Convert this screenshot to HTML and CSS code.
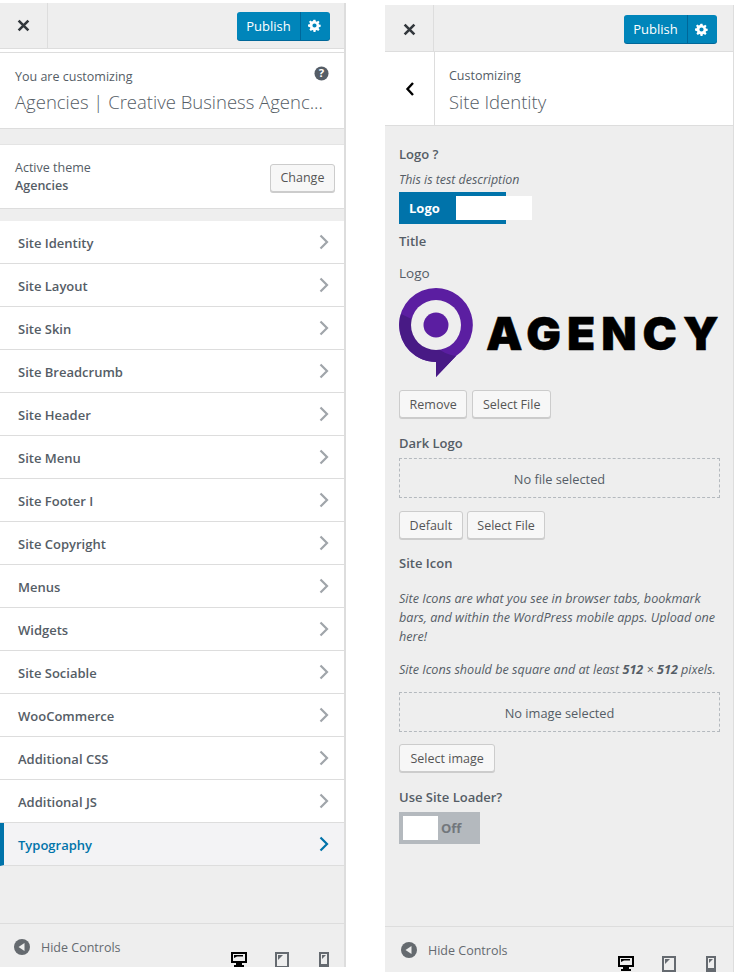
FILE: index.html
```html
<!DOCTYPE html>
<html lang="en">
<head>
    <meta charset="UTF-8">
    <title>Customizer</title>
    <link rel="stylesheet" href="styles.css">
</head>
<body>
<div class="page">
    <!-- main panel -->
    <div class="panel panel-main">
        <div class="topbar">
            <div class="close-box">
                <svg class="close-icon" viewBox="0 0 12 12"><path d="M1.5 1.5L10.5 10.5M10.5 1.5L1.5 10.5"/></svg>
            </div>
            <div class="publish">
                <span class="publish-label">Publish</span>
                <span class="publish-gear">
                    <svg class="gear-icon" viewBox="0 0 20 20"><path fill-rule="evenodd" d="M8.500 1h3l.5 2.600 1.500.6 2.200-1.500 2.100 2.100-1.500 2.200.6 1.500 2.600.5v3l-2.600.5-.6 1.500 1.500 2.200-2.100 2.100-2.200-1.500-1.500.6-.5 2.600h-3l-.5-2.600-1.500-.6-2.200 1.500-2.100-2.100 1.500-2.200-.6-1.500L-.1 11.500v-3l2.600-.5.6-1.500-1.500-2.200 2.100-2.100 2.200 1.500 1.500-.6zM10 6.800a3.200 3.200 0 1 0 0 6.400 3.200 3.200 0 0 0 0-6.400z"/></svg>
                </span>
            </div>
        </div>
        <div class="info-box">
            <div class="info-row">
                <span class="info-small">You are customizing</span>
                <svg class="help-icon" viewBox="0 0 16 16"><circle cx="8" cy="8" r="7.500"/><text x="8" y="12" text-anchor="middle">?</text></svg>
            </div>
            <div class="info-title">Agencies | Creative Business Agenc...</div>
        </div>
        <div class="theme-box">
            <div class="theme-text">
                <div class="info-small">Active theme</div>
                <div class="theme-name">Agencies</div>
            </div>
            <button class="btn btn-change">Change</button>
        </div>
        <ul class="menu-list">
            <li class="menu-item">Site Identity<svg class="chevron" viewBox="0 0 10 16"><path d="M1.500 1.500L8 8l-6.500 6.500"/></svg></li>
            <li class="menu-item">Site Layout<svg class="chevron" viewBox="0 0 10 16"><path d="M1.500 1.500L8 8l-6.500 6.500"/></svg></li>
            <li class="menu-item">Site Skin<svg class="chevron" viewBox="0 0 10 16"><path d="M1.500 1.500L8 8l-6.500 6.500"/></svg></li>
            <li class="menu-item">Site Breadcrumb<svg class="chevron" viewBox="0 0 10 16"><path d="M1.500 1.500L8 8l-6.500 6.500"/></svg></li>
            <li class="menu-item">Site Header<svg class="chevron" viewBox="0 0 10 16"><path d="M1.500 1.500L8 8l-6.500 6.500"/></svg></li>
            <li class="menu-item">Site Menu<svg class="chevron" viewBox="0 0 10 16"><path d="M1.500 1.500L8 8l-6.500 6.500"/></svg></li>
            <li class="menu-item">Site Footer I<svg class="chevron" viewBox="0 0 10 16"><path d="M1.500 1.500L8 8l-6.500 6.500"/></svg></li>
            <li class="menu-item">Site Copyright<svg class="chevron" viewBox="0 0 10 16"><path d="M1.500 1.500L8 8l-6.500 6.500"/></svg></li>
            <li class="menu-item">Menus<svg class="chevron" viewBox="0 0 10 16"><path d="M1.500 1.500L8 8l-6.500 6.500"/></svg></li>
            <li class="menu-item">Widgets<svg class="chevron" viewBox="0 0 10 16"><path d="M1.500 1.500L8 8l-6.500 6.500"/></svg></li>
            <li class="menu-item">Site Sociable<svg class="chevron" viewBox="0 0 10 16"><path d="M1.500 1.500L8 8l-6.500 6.500"/></svg></li>
            <li class="menu-item">WooCommerce<svg class="chevron" viewBox="0 0 10 16"><path d="M1.500 1.500L8 8l-6.500 6.500"/></svg></li>
            <li class="menu-item">Additional CSS<svg class="chevron" viewBox="0 0 10 16"><path d="M1.500 1.500L8 8l-6.500 6.500"/></svg></li>
            <li class="menu-item">Additional JS<svg class="chevron" viewBox="0 0 10 16"><path d="M1.500 1.500L8 8l-6.500 6.500"/></svg></li>
            <li class="menu-item menu-item-active">Typography<svg class="chevron" viewBox="0 0 10 16"><path d="M1.500 1.500L8 8l-6.500 6.500"/></svg></li>
        </ul>
        <div class="footer">
            <svg class="hide-icon" viewBox="0 0 16 16"><circle cx="8" cy="8" r="8"/><path d="M10.500 4v8L4.500 8z"/></svg>
            <span class="hide-label">Hide Controls</span>
            <div class="devices">
                <svg class="device device-desktop" viewBox="0 0 16 16"><path fill-rule="evenodd" d="M0 0h16v11h-5v2h2v2H3v-2h2v-2H0zM2 2v7h12V2z"/><path d="M3 3h9v1.500H6L3 6z"/></svg>
                <svg class="device device-tablet" viewBox="0 0 14 16"><path fill-rule="evenodd" d="M0 0h14v16H0zM2 2v12h10V2z"/><path d="M3 3h5L3 8z"/></svg>
                <svg class="device device-phone" viewBox="0 0 10 16"><path fill-rule="evenodd" d="M0 0h10v16H0zM2 2v10h6V2z"/><path d="M3 3h4L3 7z"/></svg>
            </div>
        </div>
    </div>

    <!-- site identity section -->
    <div class="panel panel-section">
        <div class="topbar">
            <div class="close-box">
                <svg class="close-icon" viewBox="0 0 12 12"><path d="M1.500 1.500L10.500 10.500M10.500 1.500L1.500 10.500"/></svg>
            </div>
            <div class="publish">
                <span class="publish-label">Publish</span>
                <span class="publish-gear">
                    <svg class="gear-icon" viewBox="0 0 20 20"><path fill-rule="evenodd" d="M8.500 1h3l.5 2.600 1.500.6 2.200-1.500 2.100 2.100-1.500 2.200.6 1.500 2.600.5v3l-2.600.5-.6 1.500 1.500 2.200-2.100 2.100-2.200-1.500-1.500.6-.5 2.600h-3l-.5-2.600-1.500-.6-2.200 1.500-2.100-2.100 1.500-2.200-.6-1.500L-.1 11.500v-3l2.600-.5.6-1.500-1.500-2.200 2.100-2.100 2.200 1.500 1.500-.6zM10 6.800a3.200 3.200 0 1 0 0 6.400 3.200 3.200 0 0 0 0-6.400z"/></svg>
                </span>
            </div>
        </div>
        <div class="section-head">
            <div class="back-box">
                <svg class="back-icon" viewBox="0 0 10 16"><path d="M8 2L2.500 8 8 14"/></svg>
            </div>
            <div class="section-head-text">
                <div class="info-small">Customizing</div>
                <div class="info-title">Site Identity</div>
            </div>
        </div>
        <div class="controls">
            <div class="label label-first">Logo ?</div>
            <div class="desc">This is test description</div>
            <div class="logo-switch">
                <span class="logo-switch-text">Logo</span>
                <span class="logo-switch-knob"></span>
            </div>
            <div class="label label-title">Title</div>
            <div class="label label-logo">Logo</div>
            <div class="logo-image">
                <svg class="logo-pin" viewBox="0 0 74 90">
                    <path d="M37 0a37 37 0 0 1 20 68L37 89V74A37 37 0 0 1 37 0z" fill="#5b1ea1"/>
                    <path d="M2 26a37 37 0 0 0 35 48v15l20-21a37 37 0 0 1-32-31z" fill="#481a85"/>
                    <circle cx="37" cy="37" r="25" fill="#eee"/>
                    <circle cx="37" cy="37" r="12.500" fill="#5b1ea1"/>
                </svg>
                <span class="logo-word">AGENCY</span>
            </div>
            <div class="btn-row">
                <button class="btn btn-remove">Remove</button>
                <button class="btn btn-file">Select File</button>
            </div>
            <div class="label label-dark">Dark Logo</div>
            <div class="placeholder">No file selected</div>
            <div class="btn-row btn-row-tight">
                <button class="btn btn-default">Default</button>
                <button class="btn btn-file">Select File</button>
            </div>
            <div class="label label-icon">Site Icon</div>
            <p class="desc desc-para">Site Icons are what you see in browser tabs, bookmark bars, and within the WordPress mobile apps. Upload one here!</p>
            <p class="desc desc-para desc-size">Site Icons should be square and at least <b>512</b> × <b>512</b> pixels.</p>
            <div class="placeholder placeholder-image">No image selected</div>
            <button class="btn btn-image">Select image</button>
            <div class="label label-loader">Use Site Loader?</div>
            <div class="loader-switch">
                <span class="loader-knob"></span>
                <span class="loader-text">Off</span>
            </div>
        </div>
        <div class="footer">
            <svg class="hide-icon" viewBox="0 0 16 16"><circle cx="8" cy="8" r="8"/><path d="M10.500 4v8L4.500 8z"/></svg>
            <span class="hide-label">Hide Controls</span>
            <div class="devices">
                <svg class="device device-desktop" viewBox="0 0 16 16"><path fill-rule="evenodd" d="M0 0h16v11h-5v2h2v2H3v-2h2v-2H0zM2 2v7h12V2z"/><path d="M3 3h9v1.500H6L3 6z"/></svg>
                <svg class="device device-tablet" viewBox="0 0 14 16"><path fill-rule="evenodd" d="M0 0h14v16H0zM2 2v12h10V2z"/><path d="M3 3h5L3 8z"/></svg>
                <svg class="device device-phone" viewBox="0 0 10 16"><path fill-rule="evenodd" d="M0 0h10v16H0zM2 2v10h6V2z"/><path d="M3 3h4L3 7z"/></svg>
            </div>
        </div>
    </div>
</div>
</body>
</html>
```

FILE: styles.css
```css
body {
    margin: 0;
    background-color: #fff;
    font-family: "Open Sans", "Noto Sans", sans-serif;
    color: #555d66;
}

.page {
    display: flex;
    width: 734px;
    height: 973px;
    overflow: hidden;
}

.panel {
    display: flex;
    flex-direction: column;
    background-color: #eee;
    overflow: hidden;
}

.panel-main {
    width: 344px;
    height: 964px;
    margin-top: 3px;
    border-right: 2px solid #ddd;
}

.panel-section {
    width: 348px;
    height: 967px;
    margin-top: 5px;
    margin-left: 39px;
    border-right: 1px solid #ddd;
}

/* top bar */
.topbar {
    display: flex;
    align-items: center;
    justify-content: space-between;
    height: 45px;
    flex-shrink: 0;
    padding-right: 14px;
    border-bottom: 1px solid #ddd;
    box-sizing: content-box;
}

.panel-section .topbar {
    height: 46px;
    padding-right: 16px;
}

.close-box {
    display: flex;
    align-items: center;
    justify-content: center;
    width: 47px;
    height: 100%;
    border-right: 1px solid #ddd;
}

.panel-section .close-box {
    width: 49px;
    padding-top: 2px;
    box-sizing: border-box;
}

.panel-section .publish {
    margin-top: 2px;
}

.close-icon {
    width: 13px;
    height: 13px;
    fill: none;
    stroke: #32373c;
    stroke-width: 2.400;
}

.publish {
    display: flex;
    height: 28px;
    border-radius: 3px;
    background-color: #0085ba;
    color: #fff;
    font-size: 13px;
    line-height: 29px;
    box-shadow: 0 1px 0 #006799;
}

.publish-label {
    width: 63px;
    text-align: center;
    border-right: 1px solid #006799;
}

.publish-gear {
    display: flex;
    align-items: center;
    justify-content: center;
    width: 29px;
    padding-right: 2px;
    box-sizing: border-box;
}

.gear-icon {
    width: 13px;
    height: 13px;
    fill: #fff;
}

/* info boxes */
.info-box {
    margin-top: 3px;
    height: 75px;
    flex-shrink: 0;
    padding: 0 15px;
    border-top: 1px solid #ddd;
    border-bottom: 1px solid #ddd;
    background-color: #fff;
    box-sizing: content-box;
    box-shadow: 0 -3px 0 #fff;
}

.info-row {
    display: flex;
    justify-content: space-between;
    align-items: center;
    padding-top: 15px;
    height: 18px;
}

.info-small {
    font-size: 12.500px;
    line-height: 18px;
}

.help-icon {
    width: 15px;
    height: 15px;
    margin: -8px 0 0 0;
    fill: #555d66;
}

.help-icon text {
    fill: #fff;
    font-size: 12px;
    font-weight: 700;
}

.info-title {
    margin-top: 4px;
    font-size: 18.500px;
    font-weight: 300;
    line-height: 26px;
    white-space: nowrap;
}

.info-box .info-title {
    margin-top: 3px;
}

.theme-box {
    display: flex;
    justify-content: space-between;
    align-items: center;
    flex-shrink: 0;
    height: 65px;
    margin-top: 15px;
    padding: 0 9px 0 15px;
    box-sizing: border-box;
    background-color: #fff;
    border-top: 1px solid #e4e4e4;
    border-bottom: 1px solid #ddd;
}

.theme-name {
    font-size: 12.500px;
    font-weight: 600;
    line-height: 18px;
}

/* buttons */
.btn {
    height: 28px;
    padding: 0 9.600px;
    border: 1px solid #ccc;
    border-radius: 3px;
    background-color: #f7f7f7;
    box-shadow: 0 1px 0 #ccc;
    color: #555;
    font-family: inherit;
    font-size: 12.500px;
    white-space: nowrap;
}

.btn-change {
    margin-top: 2px;
}

/* menu */
.menu-list {
    flex-shrink: 0;
    margin: 12px 0 0 0;
    padding: 0;
    list-style: none;
}

.menu-item {
    display: flex;
    align-items: center;
    justify-content: space-between;
    height: 40px;
    padding: 2px 15px 0 18px;
    background-color: #fff;
    border-bottom: 1px solid #ddd;
    font-size: 13px;
    font-weight: 600;
    line-height: 40px;
}

.menu-item-active {
    padding-left: 14px;
    border-left: 4px solid #0073aa;
    background-color: #f3f3f5;
    color: #0073aa;
}

.chevron {
    width: 10px;
    height: 16px;
    margin-top: -2px;
    fill: none;
    stroke: #a0a5aa;
    stroke-width: 2.200;
}

.menu-item-active .chevron {
    stroke: #0073aa;
}

/* footer */
.footer {
    display: flex;
    align-items: flex-start;
    flex-shrink: 0;
    margin-top: auto;
    height: 28px;
    padding: 15px 15px 0 14px;
    border-top: 1px solid #ddd;
    box-sizing: content-box;
}

.panel-section .footer {
    height: 30px;
    padding: 15px 17px 0 16px;
}

.hide-icon {
    width: 16px;
    height: 16px;
    fill: #656a6f;
}

.hide-icon path {
    fill: #eee;
}

.hide-label {
    margin-left: 11px;
    font-size: 12.500px;
    line-height: 18px;
    color: #656a70;
}

.devices {
    display: flex;
    align-items: flex-start;
    margin-left: auto;
    padding-top: 13px;
}

.panel-section .devices {
    padding-top: 14px;
}

.device {
    height: 16px;
    fill: #656a70;
}

.device-desktop {
    width: 16px;
    fill: #000;
}

.device-tablet {
    width: 14px;
    margin-left: 28px;
}

.device-phone {
    width: 10px;
    margin-left: 30px;
}

/* section panel */
.section-head {
    display: flex;
    flex-shrink: 0;
    height: 73px;
    background-color: #fff;
    border-bottom: 1px solid #ddd;
}

.back-box {
    display: flex;
    align-items: center;
    justify-content: center;
    width: 49px;
    border-right: 1px solid #ddd;
}

.back-icon {
    width: 10px;
    height: 16px;
    fill: none;
    stroke: #000;
    stroke-width: 2.400;
}

.section-head-text {
    padding: 15px 0 0 14px;
}

.controls {
    padding: 0 13px 0 14px;
}

.label {
    font-size: 13px;
    font-weight: 600;
    line-height: 18px;
}

.label-first {
    margin-top: 19px;
}

.desc {
    margin-top: 8px;
    font-size: 12.400px;
    font-style: italic;
    line-height: 18px;
}

.logo-switch {
    position: relative;
    width: 107px;
    height: 32px;
    margin-top: 3px;
    background-color: #0073aa;
    color: #fff;
    font-size: 13px;
    font-weight: 700;
    line-height: 32px;
}

.logo-switch-text {
    padding-left: 10px;
}

.logo-switch-knob {
    position: absolute;
    top: 4px;
    left: 57px;
    width: 76px;
    height: 24px;
    background-color: #fff;
}

.label-title {
    margin-top: 8px;
}

.label-logo {
    margin-top: 14px;
    font-size: 13.500px;
    font-weight: 500;
}

.logo-image {
    display: flex;
    align-items: center;
    height: 90px;
    margin-top: 6px;
}

.logo-pin {
    width: 74px;
    height: 90px;
    flex-shrink: 0;
}

.logo-word {
    margin: -1px 0 0 13px;
    color: #000;
    font-family: "Inter", "Liberation Sans", sans-serif;
    font-size: 46px;
    font-weight: 900;
    letter-spacing: 6px;
    line-height: 50px;
    white-space: nowrap;
    -webkit-text-stroke: 0.5px #000;
}

.btn-row {
    display: flex;
    gap: 5px;
    margin-top: 12px;
}

.btn-row-tight {
    gap: 4px;
    margin-top: 13px;
}

.label-dark {
    margin-top: 16px;
}

.placeholder {
    height: 38px;
    margin-top: 6px;
    border: 1px dashed #b4b9be;
    font-size: 12.800px;
    line-height: 40px;
    text-align: center;
}

.label-icon {
    margin-top: 15px;
}

.desc-para {
    margin: 17px 0 0;
    font-size: 12.600px;
    line-height: 19px;
}

.desc-size {
    margin-top: 14px;
}

.placeholder-image {
    margin-top: 13px;
}

.btn-image {
    display: block;
    margin-top: 12px;
    padding: 0 10.500px;
}

.label-loader {
    margin-top: 16px;
}

.loader-switch {
    display: flex;
    align-items: center;
    width: 73px;
    height: 24px;
    margin-top: 6px;
    padding: 4px;
    background-color: #b4b9be;
}

.loader-knob {
    width: 35px;
    height: 24px;
    background-color: #fff;
}

.loader-text {
    margin-left: 3px;
    color: #72777c;
    font-size: 13px;
    font-weight: 700;
}
```
